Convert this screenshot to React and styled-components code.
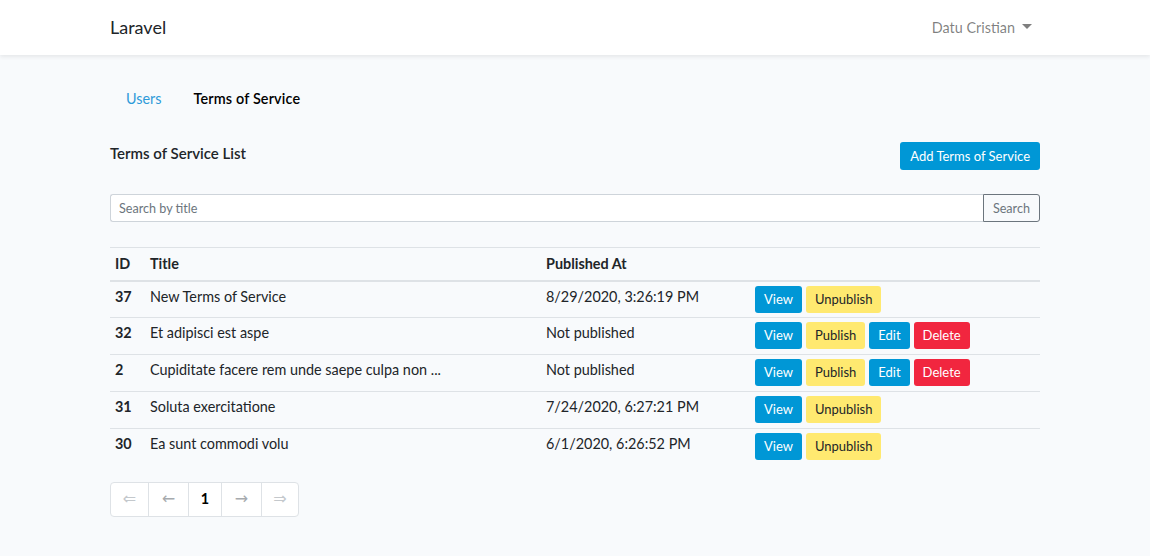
import styled, { createGlobalStyle } from 'styled-components';

const GlobalStyle = createGlobalStyle`
  * { box-sizing: border-box; }
  body {
    margin: 0;
    background-color: #f8fafc;
    color: #212529;
    font-family: "Lato", "Open Sans", sans-serif;
    font-size: 14.4px;
    line-height: 1.6;
  }
`;

const Navbar = styled.nav`
  height: 55px;
  background-color: #fff;
  box-shadow: 0 2px 4px rgba(0, 0, 0, 0.075);
`;

const Container = styled.div`
  width: 930px;
  margin: 0 auto;
`;

const NavInner = styled(Container)`
  height: 100%;
  display: flex;
  align-items: center;
  justify-content: space-between;
`;

const Brand = styled.a`
  font-size: 18px;
  color: #212529;
  text-decoration: none;
`;

const UserToggle = styled.a`
  display: flex;
  align-items: center;
  gap: 7px;
  padding-right: 8px;
  color: rgba(0, 0, 0, 0.5);
  text-decoration: none;

  &::after {
    content: '';
    border-top: 5px solid rgba(0, 0, 0, 0.5);
    border-left: 5px solid transparent;
    border-right: 5px solid transparent;
    margin-top: -2px;
  }
`;

const Main = styled.main`
  padding: 24px 0;
`;

const Tabs = styled.ul`
  display: flex;
  list-style: none;
  margin: 0 0 24px;
  padding: 0;
`;

const TabLink = styled.a`
  display: block;
  padding: 8px 16px;
  line-height: 23px;
  text-decoration: none;
  color: ${p => (p.$active ? '#000' : '#2e9ad9')};
  font-weight: ${p => (p.$active ? 600 : 400)};
  letter-spacing: ${p => (p.$active ? '0.15px' : '0')};
`;

const ListHeader = styled.div`
  display: flex;
  justify-content: space-between;
  align-items: flex-start;
  margin-bottom: 24px;
`;

const ListTitle = styled.h5`
  margin: 0;
  font-size: 15px;
  font-weight: 600;
  line-height: 22px;
`;

const Button = styled.button`
  font-family: inherit;
  font-size: 13px;
  line-height: 17px;
  padding: 4px 8px;
  border: 1px solid transparent;
  border-radius: 3px;
  cursor: pointer;
  color: ${p => (p.$variant === 'warning' ? '#212529' : '#fff')};
  background-color: ${p =>
    p.$variant === 'warning' ? '#ffe970' : p.$variant === 'danger' ? '#f1263f' : '#0097d6'};
`;

const AddButton = styled(Button)`
  height: 28px;
  padding: 4px 9px;
`;

const SearchGroup = styled.form`
  display: flex;
  margin-bottom: 25px;
`;

const SearchInput = styled.input`
  flex: 1;
  height: 28px;
  padding: 4px 8px;
  font-family: inherit;
  font-size: 12.6px;
  color: #495057;
  background: #fff;
  border: 1px solid #ced4da;
  border-right: none;
  border-radius: 3px 0 0 3px;
  outline: none;

  &::placeholder {
    color: #6c757d;
  }
`;

const SearchButton = styled.button`
  height: 28px;
  padding: 0 9px;
  font-family: inherit;
  font-size: 12.6px;
  color: #6c757d;
  background: transparent;
  border: 1px solid #6c757d;
  border-radius: 0 3px 3px 0;
`;

const Table = styled.table`
  width: 100%;
  border-collapse: collapse;
  margin-bottom: 16px;
`;

const HeadRow = styled.tr`
  height: 33px;
`;

const BodyRow = styled.tr`
  height: 37px;
`;

const Th = styled.th`
  text-align: left;
  font-weight: 700;
  padding: 0 5px;
  line-height: 23px;
  border-top: 1px solid #dee2e6;
  border-bottom: 2px solid #dee2e6;
  width: ${p => p.$w || 'auto'};
`;

const Td = styled.td`
  padding: 3px 5px 0;
  vertical-align: top;
  border-top: ${p => (p.$first ? 'none' : '1px solid #dee2e6')};
  font-weight: ${p => (p.$bold ? 700 : 400)};
  line-height: 23px;
`;

const Actions = styled.div`
  display: flex;
  gap: 4px;
  margin-top: 1px;
`;

const Pagination = styled.ul`
  display: inline-flex;
  list-style: none;
  margin: 0;
  padding: 0;
  background: #fff;
  border: 1px solid #dee2e6;
  border-radius: 4px;
`;

const PageItem = styled.li`
  width: ${p => p.$w}px;
  height: 33px;
  display: flex;
  align-items: center;
  justify-content: center;
  border-left: ${p => (p.$first ? 'none' : '1px solid #dee2e6')};
  color: ${p => (p.$active ? '#000' : p.$muted ? '#c4c8cc' : '#a6aaae')};
  font-weight: ${p => (p.$active ? 700 : 400)};
  font-family: ${p => (p.$active ? '"Lato", sans-serif' : '"DejaVu Sans", sans-serif')};
  font-size: ${p => (p.$active ? '14.4px' : '16px')};
`;

const rows = [
  { id: 37, title: 'New Terms of Service', published: '8/29/2020, 3:26:19 PM' },
  { id: 32, title: 'Et adipisci est aspe', published: null },
  { id: 2, title: 'Cupiditate facere rem unde saepe culpa non ...', published: null },
  { id: 31, title: 'Soluta exercitatione', published: '7/24/2020, 6:27:21 PM' },
  { id: 30, title: 'Ea sunt commodi volu', published: '6/1/2020, 6:26:52 PM' },
];

const pages = [
  { label: '⇐', w: 37, muted: true },
  { label: '←', w: 40 },
  { label: '1', w: 33, active: true },
  { label: '→', w: 40 },
  { label: '⇒', w: 37, muted: true },
];

export default function App() {
  return (
    <>
      <GlobalStyle />
      <Navbar>
        <NavInner>
          <Brand href="#">Laravel</Brand>
          <UserToggle href="#">Datu Cristian</UserToggle>
        </NavInner>
      </Navbar>
      <Main>
        <Container>
          <Tabs>
            <li><TabLink href="#">Users</TabLink></li>
            <li><TabLink href="#" $active>Terms of Service</TabLink></li>
          </Tabs>

          <ListHeader>
            <ListTitle>Terms of Service List</ListTitle>
            <AddButton>Add Terms of Service</AddButton>
          </ListHeader>

          <SearchGroup onSubmit={e => e.preventDefault()}>
            <SearchInput placeholder="Search by title" />
            <SearchButton type="submit">Search</SearchButton>
          </SearchGroup>

          <Table>
            <thead>
              <HeadRow>
                <Th $w="35px">ID</Th>
                <Th $w="396px">Title</Th>
                <Th $w="209px">Published At</Th>
                <Th />
              </HeadRow>
            </thead>
            <tbody>
              {rows.map((r, i) => (
                <BodyRow key={r.id}>
                  <Td $first={i === 0} $bold>{r.id}</Td>
                  <Td $first={i === 0}>{r.title}</Td>
                  <Td $first={i === 0}>{r.published || 'Not published'}</Td>
                  <Td $first={i === 0}>
                    <Actions>
                      <Button>View</Button>
                      {r.published ? (
                        <Button $variant="warning">Unpublish</Button>
                      ) : (
                        <>
                          <Button $variant="warning">Publish</Button>
                          <Button>Edit</Button>
                          <Button $variant="danger">Delete</Button>
                        </>
                      )}
                    </Actions>
                  </Td>
                </BodyRow>
              ))}
            </tbody>
          </Table>

          <Pagination>
            {pages.map((p, i) => (
              <PageItem key={i} $w={p.w} $first={i === 0} $active={p.active} $muted={p.muted}>
                {p.label}
              </PageItem>
            ))}
          </Pagination>
        </Container>
      </Main>
    </>
  );
}
